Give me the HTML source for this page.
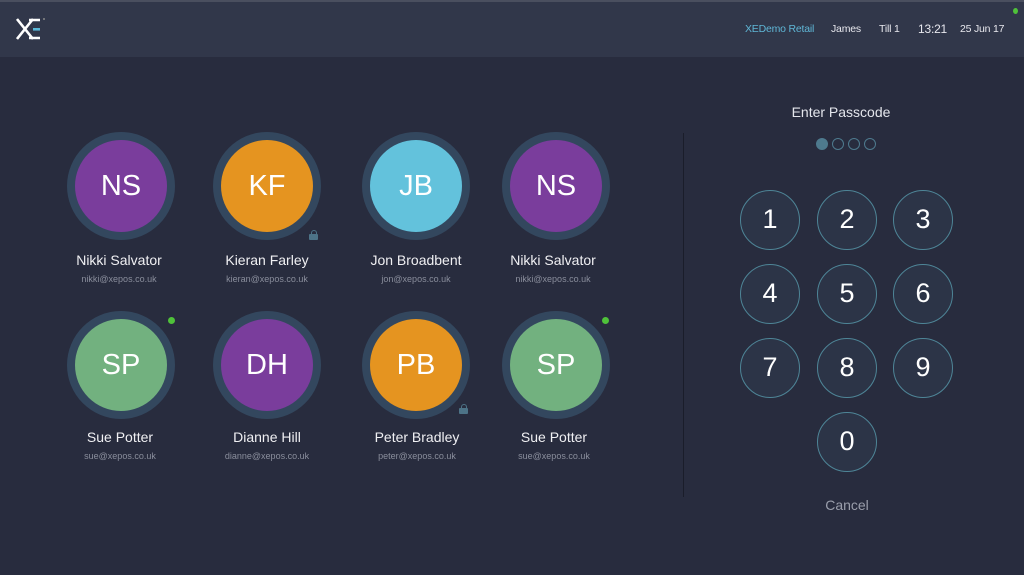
<!DOCTYPE html>
<html><head><style>
body{margin:0;width:1024px;height:575px;background:#282c3e;font-family:"Liberation Sans","DejaVu Sans",sans-serif;position:relative;overflow:hidden;color:#fff}
.hdr{position:absolute;left:0;top:0;width:1024px;height:57px;background:#31374a;border-top:2px solid #4a4f5f;box-sizing:border-box}
.h{position:absolute;top:21px;font-size:10.5px;color:#e8e8ee;letter-spacing:-0.2px}
.av{position:absolute;width:108px;height:108px;border-radius:50%;background:#33475e}
.av div{position:absolute;left:8px;top:8px;width:92px;height:92px;border-radius:50%;font-size:29px;line-height:92px;text-align:center;color:#fff}
.nm{position:absolute;width:160px;text-align:center;font-size:14px;color:#f0f0f3}
.em{position:absolute;width:160px;text-align:center;font-size:9px;color:#8a8e9c}
.k{position:absolute;width:60px;height:60px;border-radius:50%;border:1.5px solid #4e8597;box-sizing:border-box;background:#2c3447;font-size:27px;line-height:57px;text-align:center;color:#fff}
.dot{position:absolute;top:138px;width:12px;height:12px;border-radius:50%;border:1px solid #4e7a8e;box-sizing:border-box}
.g{position:absolute;width:7px;height:7px;border-radius:50%;background:#4fc23a}
.lock{position:absolute;width:9px;height:6px;background:#4d7387;border-radius:1px}
.lock:before{content:"";position:absolute;left:1.5px;top:-4px;width:4px;height:4px;border:1.5px solid #4d7387;border-bottom:none;border-radius:3px 3px 0 0}
</style></head><body>
<div class="hdr">
<svg style="position:absolute;left:16px;top:15px" width="32" height="24" viewBox="0 0 32 24"><path d="M1 2 L17 22 M17 2 L1 22" stroke="#fff" stroke-width="2.6" fill="none"/><path d="M13 3 H24 M13 21 H24" stroke="#fff" stroke-width="2.6"/><rect x="17" y="11" width="7" height="2.6" fill="#5bb9d9"/><circle cx="28" cy="2" r="1" fill="#888"/></svg>
<span class="h" style="left:745px;color:#5fb6d6">XEDemo Retail</span>
<span class="h" style="left:831px">James</span>
<span class="h" style="left:879px">Till 1</span>
<span class="h" style="left:918px;font-size:12px;top:20px">13:21</span>
<span class="h" style="left:960px">25 Jun 17</span>
<div class="g" style="left:1013px;top:6px;width:5px;height:6px"></div>
</div>

<div class="av" style="left:67px;top:132px"><div style="background:#7a3d9c">NS</div></div>
<div class="av" style="left:213px;top:132px"><div style="background:#e59420">KF</div></div>
<div class="av" style="left:362px;top:132px"><div style="background:#63c2dc">JB</div></div>
<div class="av" style="left:502px;top:132px"><div style="background:#7a3d9c">NS</div></div>
<div class="av" style="left:67px;top:311px"><div style="background:#72b17f">SP</div></div>
<div class="av" style="left:213px;top:311px"><div style="background:#7a3d9c">DH</div></div>
<div class="av" style="left:362px;top:311px"><div style="background:#e59420">PB</div></div>
<div class="av" style="left:502px;top:311px"><div style="background:#72b17f">SP</div></div>
<div class="lock" style="left:309px;top:234px"></div>
<div class="lock" style="left:459px;top:408px"></div>
<div class="g" style="left:168px;top:317px"></div>
<div class="g" style="left:602px;top:317px"></div>

<div class="nm" style="left:39px;top:252px">Nikki Salvator</div><div class="em" style="left:39px;top:274px">nikki@xepos.co.uk</div>
<div class="nm" style="left:187px;top:252px">Kieran Farley</div><div class="em" style="left:187px;top:274px">kieran@xepos.co.uk</div>
<div class="nm" style="left:336px;top:252px">Jon Broadbent</div><div class="em" style="left:336px;top:274px">jon@xepos.co.uk</div>
<div class="nm" style="left:473px;top:252px">Nikki Salvator</div><div class="em" style="left:473px;top:274px">nikki@xepos.co.uk</div>
<div class="nm" style="left:40px;top:429px">Sue Potter</div><div class="em" style="left:40px;top:451px">sue@xepos.co.uk</div>
<div class="nm" style="left:187px;top:429px">Dianne Hill</div><div class="em" style="left:187px;top:451px">dianne@xepos.co.uk</div>
<div class="nm" style="left:337px;top:429px">Peter Bradley</div><div class="em" style="left:337px;top:451px">peter@xepos.co.uk</div>
<div class="nm" style="left:474px;top:429px">Sue Potter</div><div class="em" style="left:474px;top:451px">sue@xepos.co.uk</div>

<div style="position:absolute;left:683px;top:133px;width:1px;height:364px;background:#1a1d2a"></div>
<div style="position:absolute;left:746px;top:104px;width:190px;text-align:center;font-size:14px;color:#e4e6ec">Enter Passcode</div>
<div class="dot" style="left:816px;background:#4e7a8e"></div>
<div class="dot" style="left:832px"></div>
<div class="dot" style="left:848px"></div>
<div class="dot" style="left:864px"></div>

<div class="k" style="left:740px;top:190px">1</div><div class="k" style="left:817px;top:190px">2</div><div class="k" style="left:893px;top:190px">3</div>
<div class="k" style="left:740px;top:264px">4</div><div class="k" style="left:817px;top:264px">5</div><div class="k" style="left:893px;top:264px">6</div>
<div class="k" style="left:740px;top:338px">7</div><div class="k" style="left:817px;top:338px">8</div><div class="k" style="left:893px;top:338px">9</div>
<div class="k" style="left:817px;top:412px">0</div>
<div style="position:absolute;left:797px;top:497px;width:100px;text-align:center;font-size:14px;color:#9a9eab">Cancel</div>
</body></html>
